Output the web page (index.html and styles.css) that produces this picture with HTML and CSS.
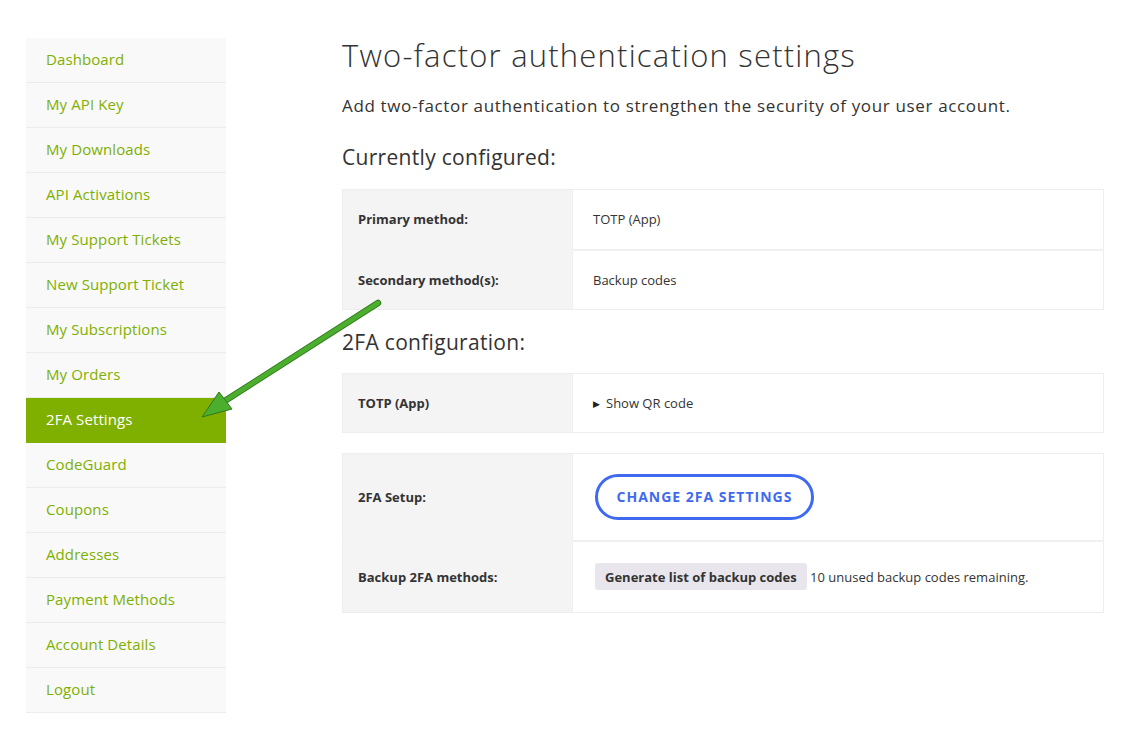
FILE: index.html
```html
<!DOCTYPE html>
<html lang="en">
<head>
<meta charset="utf-8">
<title>Two-factor authentication settings</title>
<link rel="stylesheet" href="styles.css">
</head>
<body>
<div class="page">
  <nav class="sidebar">
    <a class="nav-item" href="#">Dashboard</a>
    <a class="nav-item" href="#">My API Key</a>
    <a class="nav-item" href="#">My Downloads</a>
    <a class="nav-item" href="#">API Activations</a>
    <a class="nav-item" href="#">My Support Tickets</a>
    <a class="nav-item" href="#">New Support Ticket</a>
    <a class="nav-item" href="#">My Subscriptions</a>
    <a class="nav-item" href="#">My Orders</a>
    <a class="nav-item active" href="#">2FA Settings</a>
    <a class="nav-item" href="#">CodeGuard</a>
    <a class="nav-item" href="#">Coupons</a>
    <a class="nav-item" href="#">Addresses</a>
    <a class="nav-item" href="#">Payment Methods</a>
    <a class="nav-item" href="#">Account Details</a>
    <a class="nav-item" href="#">Logout</a>
  </nav>
  <main class="content">
    <h1 class="title">Two-factor authentication settings</h1>
    <p class="intro">Add two-factor authentication to strengthen the security of your user account.</p>
    <h2 class="section">Currently configured:</h2>
    <table class="info info-first">
      <tr class="row-top"><th>Primary method:</th><td>TOTP (App)</td></tr>
      <tr class="row-top"><th>Secondary method(s):</th><td>Backup codes</td></tr>
    </table>
    <h2 class="section section-2">2FA configuration:</h2>
    <table class="info">
      <tr class="row-60"><th>TOTP (App)</th><td><span class="tri">&#9654;</span>Show QR code</td></tr>
    </table>
    <table class="info info-gap">
      <tr class="row-setup"><th>2FA Setup:</th><td><a class="btn-outline" href="#">CHANGE 2FA SETTINGS</a></td></tr>
      <tr class="row-backup"><th>Backup 2FA methods:</th><td><button class="btn-grey" type="button">Generate list of backup codes</button> 10 unused backup codes remaining.</td></tr>
    </table>
  </main>
</div>
<svg class="arrow" width="1131" height="736" viewBox="0 0 1131 736">
  <line x1="378" y1="303" x2="220" y2="404" stroke="#2f7a1a" stroke-width="6.5" stroke-linecap="round"/>
  <line x1="378" y1="303" x2="220" y2="404" stroke="#4cae2f" stroke-width="4.5" stroke-linecap="round"/>
  <polygon points="202,417 219,392 232,409" fill="#4cae2f" stroke="#2f7a1a" stroke-width="1"/>
</svg>
</body>
</html>
```
FILE: styles.css
```css
html, body {
  margin: 0;
  padding: 0;
  background: #ffffff;
}
body {
  font-family: "Open Sans", "Liberation Sans", sans-serif;
  color: #333333;
}
.page {
  display: flex;
  align-items: flex-start;
  padding: 38px 0 0 26px;
  gap: 116px;
}
.sidebar {
  width: 200px;
  flex: 0 0 200px;
  display: flex;
  flex-direction: column;
  background: #f9f9f9;
}
.nav-item {
  display: flex;
  align-items: center;
  box-sizing: border-box;
  height: 45px;
  padding: 0 0 2px 20px;
  border-bottom: 1px solid #ececec;
  color: #7fb000;
  text-decoration: none;
  font-size: 15px;
  letter-spacing: 0.1px;
}
.nav-item.active {
  background: #7fb000;
  color: #ffffff;
  border-bottom-color: #7fb000;
}
.content {
  width: 762px;
  flex: 0 0 762px;
}
.title {
  margin: 0;
  font-size: 31px;
  font-weight: 300;
  line-height: 34px;
  color: #333;
  letter-spacing: 1.2px;
}
.intro {
  margin: 23px 0 0 0;
  font-size: 17px;
  line-height: 22px;
  color: #333;
  letter-spacing: 0.65px;
}
.section {
  margin: 27px 0 0 0;
  font-size: 21px;
  font-weight: 400;
  line-height: 26px;
  color: #333;
  letter-spacing: 0.3px;
}
.section-2 {
  margin-top: 19px;
}
.info {
  width: 100%;
  table-layout: fixed;
  margin-top: 18px;
  border-collapse: collapse;
  border: 1px solid #eeeeee;
  font-size: 13px;
}
.info-first {
  margin-top: 19px;
}
.info-gap {
  margin-top: 20px;
}
.info th {
  box-sizing: border-box;
  width: 230px;
  padding: 0 0 0 15px;
  text-align: left;
  background: #f4f4f4;
  font-weight: 700;
  color: #333;
  border-bottom: 2px solid #f4f4f4;
}
.info td {
  padding: 0 0 0 20px;
  border-bottom: 2px solid #f0f0f0;
  border-left: 1px solid #f0f0f0;
  color: #333;
}
.info tr:last-child th,
.info tr:last-child td {
  border-bottom: 0;
}
.row-top { height: 60px; }
.row-60 { height: 59px; }
.row-setup { height: 87px; }
.row-backup { height: 72px; }
.tri {
  font-size: 9px;
  margin-right: 6px;
  color: #222;
  position: relative;
  top: -1px;
}
.btn-outline {
  display: inline-flex;
  align-items: center;
  justify-content: center;
  box-sizing: border-box;
  width: 219px;
  height: 46px;
  margin-left: 2px;
  border: 3px solid #3f6af0;
  border-radius: 23px;
  color: #3f6af0;
  text-decoration: none;
  font-weight: 700;
  font-size: 14px;
  letter-spacing: 1px;
}
.btn-grey {
  font-family: inherit;
  height: 27px;
  margin-left: 2px;
  padding: 0 10px;
  border: 0;
  border-radius: 3px;
  background: #e8e6ec;
  color: #333;
  font-weight: 700;
  font-size: 13px;
}
.arrow {
  position: absolute;
  left: 0;
  top: 0;
  pointer-events: none;
}
```
